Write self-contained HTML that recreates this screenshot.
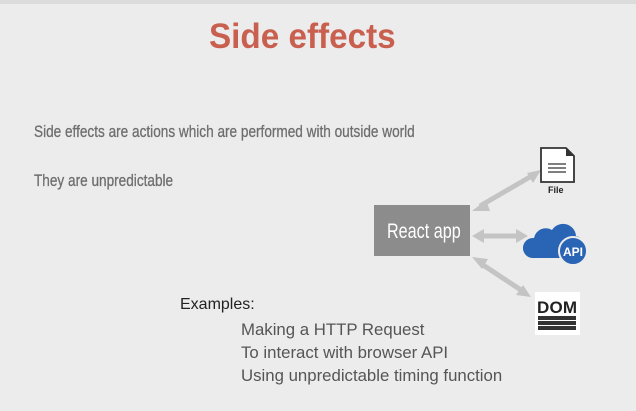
<!DOCTYPE html>
<html><head><style>
body{margin:0;width:636px;height:411px;background:#ececec;overflow:hidden;position:relative;font-family:"Liberation Sans",sans-serif}
.t{position:absolute;white-space:nowrap;transform-origin:0 0}
</style></head><body>
<div style="position:absolute;left:0;top:0;width:636px;height:4px;background:#dcdcdc"></div>
<div class="t" style="left:209px;top:17px;font-size:35px;font-weight:bold;color:#c9604f;transform:scaleX(0.95)">Side effects</div>
<div class="t" style="left:34px;top:122px;font-size:17px;color:#6e6e6e;transform:scaleX(0.80);-webkit-text-stroke:0.3px #6e6e6e">Side effects are actions which are performed with outside world</div>
<div class="t" style="left:34px;top:171px;font-size:17px;color:#6e6e6e;transform:scaleX(0.80);-webkit-text-stroke:0.3px #6e6e6e">They are unpredictable</div>
<div style="position:absolute;left:374px;top:205px;width:96px;height:51px;background:#8c8c8c"></div>
<div class="t" style="left:387px;top:220px;font-size:21px;color:#fff;transform:scaleX(0.77)">React app</div>
<svg style="position:absolute;left:0;top:0" width="636" height="411">
<g stroke="#c4c4c4" stroke-width="5" fill="#c4c4c4">
<line x1="480" y1="206" x2="535" y2="174"/>
<polygon points="472,211 486,200 490,211" stroke="none"/>
<polygon points="541,170 527,173 533,183" stroke="none"/>
<line x1="480" y1="236" x2="520" y2="236"/>
<polygon points="472,236 484,229 484,243" stroke="none"/>
<polygon points="528,236 516,229 516,243" stroke="none"/>
<line x1="480" y1="263" x2="524" y2="292"/>
<polygon points="472,257 488,259 482,269" stroke="none"/>
<polygon points="531,297 516,295 523,285" stroke="none"/>
</g>
<path d="M541 148h25l8 8v26h-33z" fill="#fff" stroke="#333" stroke-width="1.8"/>
<path d="M566 148v8h8z" fill="#333"/>
<g stroke="#333" stroke-width="1.3"><line x1="548" y1="164" x2="566" y2="164"/><line x1="548" y1="168" x2="566" y2="168"/><line x1="548" y1="172" x2="566" y2="172"/></g>
<text x="548" y="193" font-size="9" font-weight="bold" fill="#222" font-family="Liberation Sans">File</text>
<path d="M532 258 a10 10 0 0 1 2-20 a12 12 0 0 1 18-8 a13 13 0 0 1 24 6 a9 9 0 0 1 4 16 v6z" fill="#2a64b4"/>
<circle cx="573" cy="251" r="14" fill="#2a64b4" stroke="#ececec" stroke-width="2"/>
<text x="573" y="256" font-size="12" font-weight="bold" fill="#fff" text-anchor="middle" font-family="Liberation Sans">API</text>
<rect x="535" y="292" width="45" height="43" fill="#fff"/>
<text x="537" y="313" font-size="17" font-weight="bold" fill="#222" font-family="Liberation Sans" textLength="40">DOM</text>
<rect x="538" y="316" width="38" height="4" fill="#333"/><rect x="538" y="321" width="38" height="4" fill="#333"/><rect x="538" y="326" width="38" height="4" fill="#333"/>
</svg>
<div class="t" style="left:180px;top:296px;font-size:16px;color:#222">Examples:</div>
<div class="t" style="left:241px;top:320px;font-size:16.8px;color:#555">Making a HTTP Request</div>
<div class="t" style="left:241px;top:343px;font-size:16.8px;color:#555">To interact with browser API</div>
<div class="t" style="left:241px;top:366px;font-size:16.8px;color:#555">Using unpredictable timing function</div>
</body></html>
